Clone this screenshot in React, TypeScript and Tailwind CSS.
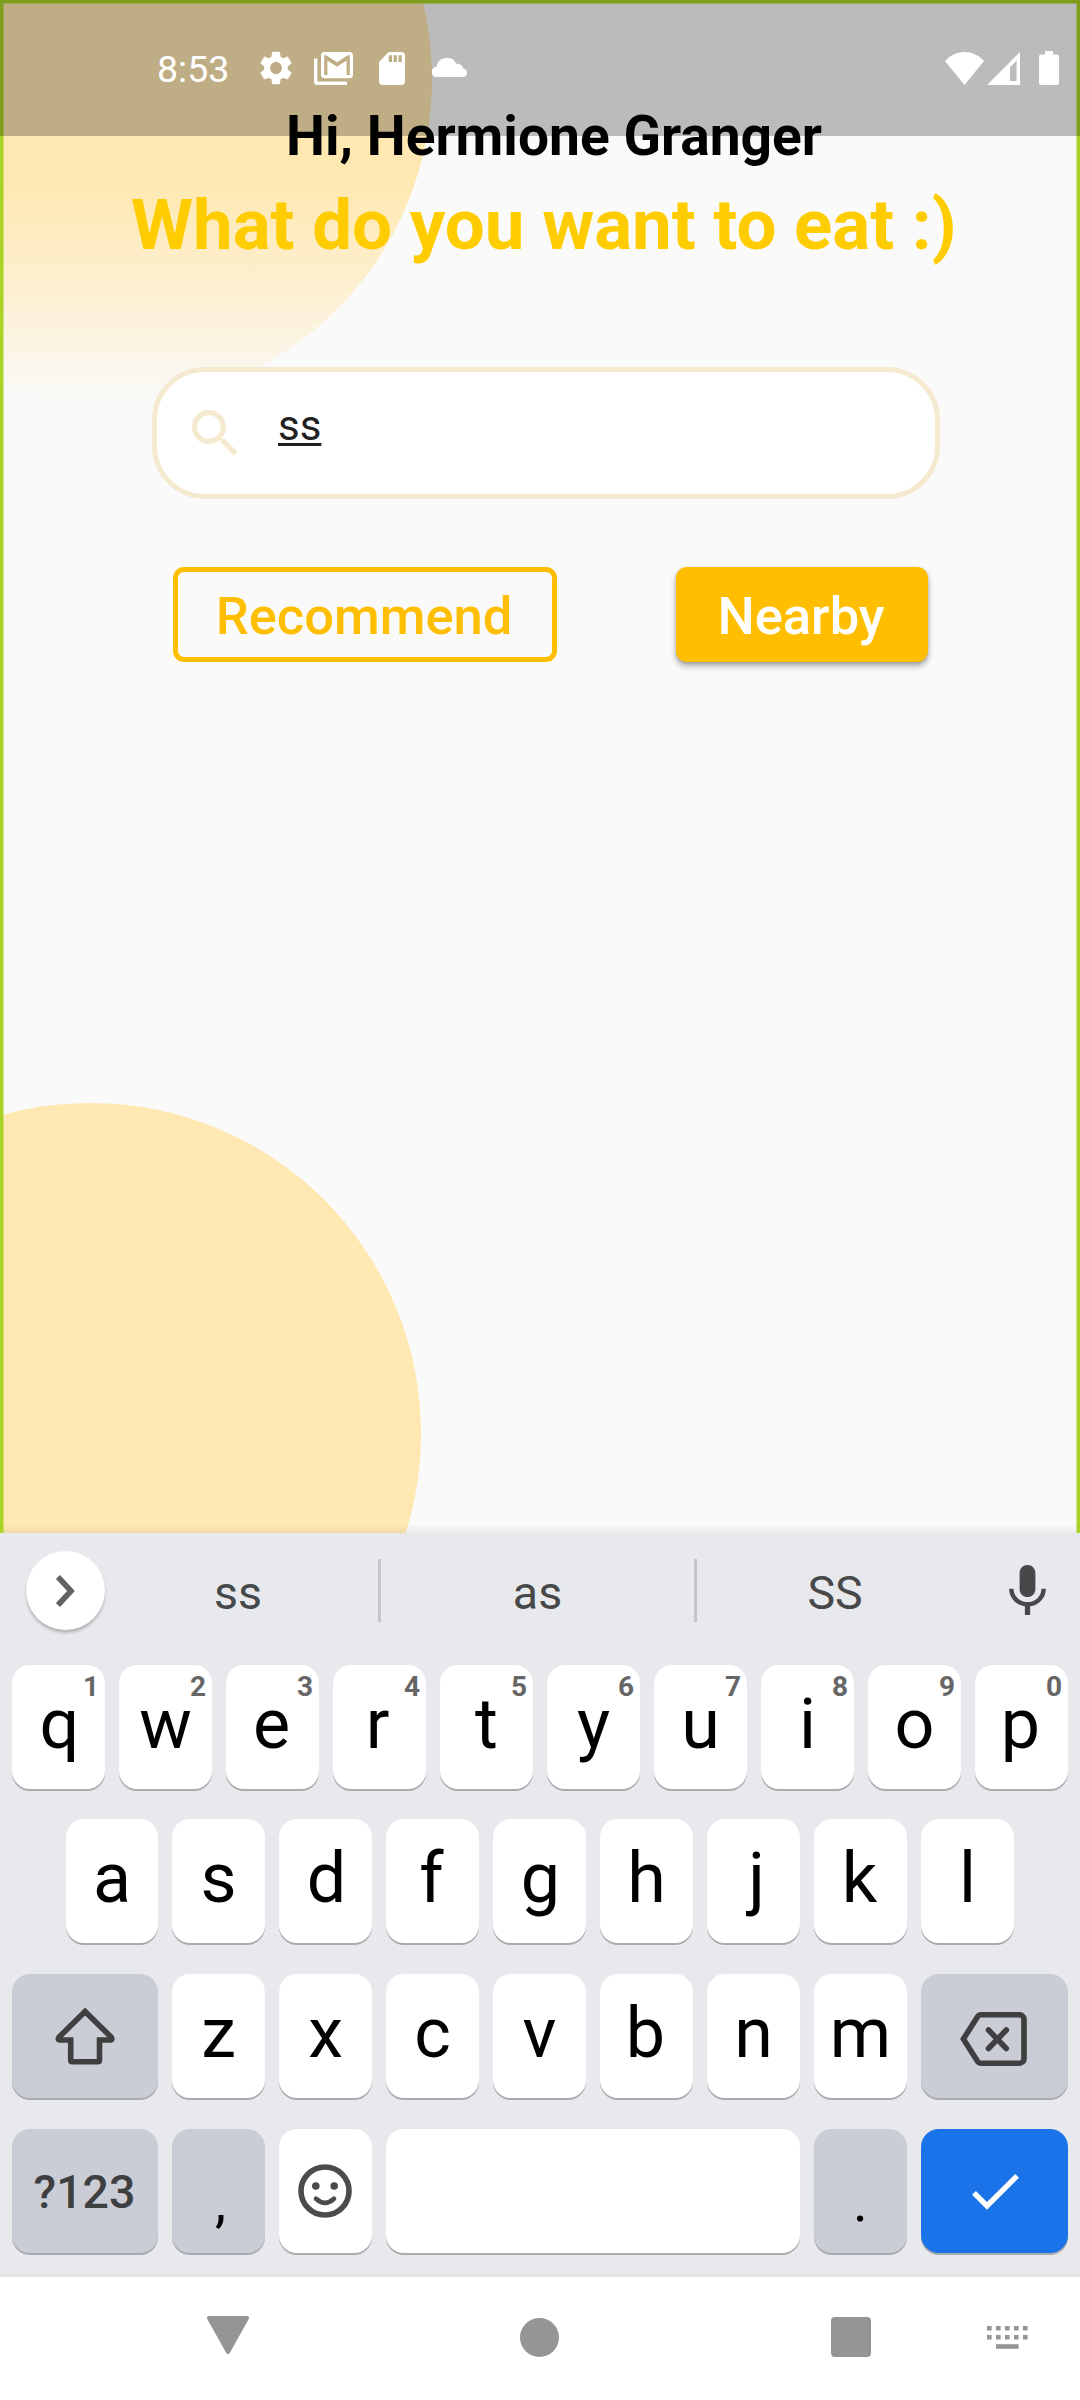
import type { ReactNode } from "react";

/* ---------- Background ---------- */

function Backdrop() {
  return (
    <svg className="absolute inset-0" width="1080" height="1533" viewBox="0 0 1080 1533">
      <defs>
        <linearGradient id="fade" gradientUnits="userSpaceOnUse" x1="0" y1="185" x2="0" y2="404">
          <stop offset="0" stopColor="#ffe8b2" />
          <stop offset="0.5" stopColor="#ffe8b2" stopOpacity="0.55" />
          <stop offset="1" stopColor="#ffe8b2" stopOpacity="0" />
        </linearGradient>
        <linearGradient id="shade" x1="0" y1="0" x2="0" y2="1">
          <stop offset="0" stopColor="#000" stopOpacity="0" />
          <stop offset="1" stopColor="#000" stopOpacity="0.06" />
        </linearGradient>
      </defs>
      <circle cx="105.5" cy="79" r="326.5" fill="url(#fade)" />
      <circle cx="90.5" cy="1433.5" r="330.5" fill="#ffe8b2" />
      <rect x="0" y="1524" width="1080" height="9" fill="url(#shade)" />
      <path d="M3.5 1533V3.5H1076.5V1533" fill="none" stroke="#a9d325" strokeOpacity="0.5" strokeWidth="1" />
      <path d="M1.5 1533V1.5H1078.5V1533" fill="none" stroke="#a9d325" strokeWidth="3" />
    </svg>
  );
}

/* ---------- Status bar ---------- */

function StatusBar() {
  return (
    <div className="relative flex h-[136px] shrink-0 items-center bg-black/25 pr-[21px] pl-[157px] text-white">
      <span className="w-[103px] pt-[2px] text-[37.5px] leading-[40px]">8:53</span>
      <svg className="h-[34px] w-[32px]" viewBox="2.3 2 19.4 20" preserveAspectRatio="none" fill="currentColor">
        <path d="M19.14 12.94c.04-.3.06-.61.06-.94 0-.32-.02-.64-.07-.94l2.03-1.58c.18-.14.23-.41.12-.61l-1.92-3.32c-.12-.22-.37-.29-.59-.22l-2.39.96c-.5-.38-1.03-.7-1.62-.94l-.36-2.54c-.04-.24-.24-.41-.48-.41h-3.84c-.24 0-.43.17-.47.41l-.36 2.54c-.59.24-1.13.57-1.62.94l-2.39-.96c-.22-.08-.47 0-.59.22L2.74 8.87c-.12.21-.08.47.12.61l2.03 1.58c-.05.3-.09.63-.09.94s.02.64.07.94l-2.03 1.58c-.18.14-.23.41-.12.61l1.92 3.32c.12.22.37.29.59.22l2.39-.96c.5.38 1.03.7 1.62.94l.36 2.54c.05.24.24.41.48.41h3.84c.24 0 .44-.17.47-.41l.36-2.54c.59-.24 1.13-.56 1.62-.94l2.39.96c.22.08.47 0 .59-.22l1.92-3.32c.12-.22.07-.47-.12-.61l-2.01-1.58zM12 15.6c-1.98 0-3.6-1.62-3.6-3.6s1.62-3.6 3.6-3.6 3.6 1.62 3.6 3.6-1.62 3.6-3.6 3.6z" />
      </svg>
      <svg className="ml-[22px] h-[33px] w-[39px]" viewBox="0 0 39 33" fill="currentColor">
        <path d="M0 6.5h3.4v23h29.6V33H3.2A3.2 3.2 0 0 1 0 29.8z" />
        <g transform="translate(3.8 -6.56) scale(1.6 1.64)">
          <path fillRule="evenodd" d="M20 4H4c-1.1 0-2 .9-2 2v12c0 1.1.9 2 2 2h16c1.1 0 2-.9 2-2V6c0-1.1-.9-2-2-2zm0 14h-2V9.25L12 13 6 9.25V18H4V6h1.2l6.8 4.25L18.8 6H20v12z" />
        </g>
      </svg>
      <svg className="ml-[26px] h-[33px] w-[26px]" viewBox="4 2 16 20" preserveAspectRatio="none" fill="currentColor">
        <path d="M18 2h-8L4.02 8 4 20c0 1.1.9 2 2 2h12c1.1 0 2-.9 2-2V4c0-1.1-.9-2-2-2zm-6 6h-2V4h2v4zm3 0h-2V4h2v4zm3 0h-2V4h2v4z" />
      </svg>
      <svg className="-mt-[2px] ml-[27px] h-[20px] w-[36px]" viewBox="0 0 36 20" fill="currentColor">
        <path d="M5 20A5 5 0 0 1 4.4 9.8 10.6 10.6 0 0 1 24.4 6.8 7 7 0 0 1 31.4 11.4 4.4 4.4 0 0 1 31.6 20z" />
      </svg>
      <svg className="ml-auto h-[33px] w-[39px]" viewBox="0 0 39 33" fill="currentColor">
        <path d="M19.5 33 0 9C11-3 28-3 39 9z" />
      </svg>
      <svg className="ml-[3px] h-[33px] w-[33px]" viewBox="0 0 33 33" fill="currentColor">
        <path fillRule="evenodd" d="M0 33H33V0zM23 29V15.5L29.6 8.5V29z" />
      </svg>
      <svg className="ml-[19px] h-[34px] w-[20px]" viewBox="0 0 20 34" fill="currentColor">
        <path d="M6 0h8v3.4h4a2 2 0 0 1 2 2V32a2 2 0 0 1-2 2H2a2 2 0 0 1-2-2V5.4a2 2 0 0 1 2-2h4z" />
      </svg>
    </div>
  );
}

/* ---------- App screen ---------- */

function Screen() {
  return (
    <main className="relative flex h-[1533px] flex-col overflow-hidden bg-[#fafafa]">
      <Backdrop />
      <StatusBar />
      <header className="relative -mt-[33px] font-bold whitespace-nowrap">
        <h1 className="pl-[286px] text-[55.125px] leading-[66px] text-black">Hi, Hermione Granger</h1>
        <p className="mt-[15px] pl-[131px] text-[70.875px] leading-[82px] text-[#ffcc00]">What do you want to eat :)</p>
      </header>
      <div className="relative mt-[101px] ml-[152px] flex h-[132px] w-[788px] rounded-[53px] border-[5px] border-[#f5e9cf] bg-white pl-[27px]">
        <svg className="mt-[30px] size-[63px] text-[#f5e9cf]" viewBox="0 0 24 24" fill="currentColor">
          <path d="M15.5 14h-.79l-.28-.27C15.41 12.59 16 11.11 16 9.5 16 5.91 13.09 3 9.5 3S3 5.91 3 9.5 5.91 16 9.5 16c1.61 0 3.09-.59 4.23-1.57l.27.28v.79l5 4.99L20.49 19l-4.99-5zm-6 0C7.01 14 5 11.99 5 9.5S7.01 5 9.5 5 14 7.01 14 9.5 11.99 14 9.5 14z" />
        </svg>
        <span className="mt-[29px] ml-[31px] h-[49px] text-[42px] leading-[49px] text-[#212121] underline decoration-[2.5px] underline-offset-[3px]">
          ss
        </span>
      </div>
      <div className="relative mt-[68px] flex gap-[119px] pl-[173px] text-[52.5px] leading-[62px] font-medium">
        <button className="h-[95px] w-[384px] rounded-[11px] border-[5px] border-[#ffbf00] pt-[2px] pr-[2px] text-[#ffbf00]">
          Recommend
        </button>
        <button className="h-[95px] w-[252px] rounded-[11px] bg-[#ffbf00] pt-[2px] pr-[2px] text-white shadow-[0_4px_6px_rgba(0,0,0,0.32),0_1px_3px_rgba(0,0,0,0.14)]">
          Nearby
        </button>
      </div>
    </main>
  );
}

/* ---------- Keyboard ---------- */

type KeyProps = { children?: ReactNode; className?: string; hint?: string };

function Key({ children, className = "w-[93px] bg-white", hint }: KeyProps) {
  return (
    <div
      className={`relative flex h-[124px] shrink-0 items-center justify-center rounded-[18px] shadow-[0_2px_0_#a9abae] ${className}`}
    >
      {children}
      {hint && (
        <span className="absolute top-[5px] right-[6px] text-[28px] leading-[34px] font-bold text-[#666666]">{hint}</span>
      )}
    </div>
  );
}

// Optical centring: glyphs with uneven side bearings are nudged so that their ink sits mid-key.
const nudge: Record<string, string> = {
  q: "translate-x-[1px]",
  d: "translate-x-[1px]",
  g: "translate-x-[1px]",
  j: "translate-x-[3px]",
  e: "-translate-x-[1px]",
  r: "-translate-x-[2px]",
  f: "-translate-x-[1px]",
  k: "-translate-x-[1px]",
  b: "-translate-x-[1px]",
  p: "-translate-x-[1px]",
};

function Letter({ children }: { children: string }) {
  return (
    <span className={`pb-[6px] text-[70px] leading-[82px] text-black ${nudge[children] ?? ""}`}>{children}</span>
  );
}

const grey = "bg-[#cbcdd6]";
const topRow = "qwertyuiop".split("");
const midRow = "asdfghjkl".split("");
const lowRow = "zxcvbnm".split("");

function Suggestions() {
  return (
    <div className="flex h-[132px] text-[46.5px] leading-[54px] text-[#474849]">
      <div className="flex w-[98px] pt-[18px] pl-[26px]">
        <span className="flex size-[79px] shrink-0 items-center justify-center rounded-full bg-white shadow-[0_3px_3px_rgba(0,0,0,0.22)]">
          <svg className="h-[32px] w-[19px]" viewBox="0 0 19 32" fill="none" stroke="#626262" strokeWidth="5.6">
            <path d="M2 2 15 16 2 30" />
          </svg>
        </span>
      </div>
      <span className="mt-[33px] w-[280px] text-center">ss</span>
      <i className="mt-[26px] h-[63px] w-[3px] bg-[#c4c5c9]" />
      <span className="mt-[33px] w-[313px] text-center">as</span>
      <i className="mt-[26px] h-[63px] w-[3px] bg-[#c4c5c9]" />
      <span className="mt-[33px] w-[277px] pr-[1px] text-center">SS</span>
      <svg className="mt-[32px] ml-[35px] h-[50px] w-[37px] text-[#47484a]" viewBox="5 2 14 19" fill="currentColor">
        <path d="M12 14.2c1.66 0 3-1.34 3-3V5c0-1.66-1.34-3-3-3S9 3.34 9 5v6.2c0 1.66 1.34 3 3 3zM17.3 11c0 3-2.54 5.1-5.3 5.1S6.7 14 6.7 11H5c0 3.41 2.72 6.23 6 6.72V21h2v-3.28c3.28-.48 6-3.3 6-6.72h-1.7z" />
      </svg>
    </div>
  );
}

function Keyboard() {
  return (
    <section className="flex h-[741px] flex-col bg-[#e8e9ed]">
      <Suggestions />
      <div className="flex flex-col gap-[31px] px-[12px]">
        <div className="flex gap-[14px]">
          {topRow.map((k, i) => (
            <Key key={k} hint={String((i + 1) % 10)} className="-mb-px h-[123px] w-[93px] bg-white">
              <Letter>{k}</Letter>
            </Key>
          ))}
        </div>
        <div className="flex gap-[14px] pl-[54px]">
          {midRow.map((k) => (
            <Key key={k} className={k === "a" ? "w-[92px] bg-white" : "w-[93px] bg-white"}>
              <Letter>{k}</Letter>
            </Key>
          ))}
        </div>
        <div className="flex gap-[14px]">
          <Key className={`w-[146px] ${grey}`}>
            <svg className="h-[58px] w-[60px]" viewBox="55 2006.5 60 58" fill="none" stroke="#3f3f40" strokeWidth="5.6">
              <path d="M85.1 2011 111.3 2036.8Q112.8 2039.5 110.5 2039.5H99.5V2059.5Q99.5 2061.2 97.8 2061.2H72.4Q70.7 2061.2 70.7 2059.5V2039.5H59.7Q57.4 2039.5 58.9 2036.8z" />
            </svg>
          </Key>
          {lowRow.map((k) => (
            <Key key={k}>
              <Letter>{k}</Letter>
            </Key>
          ))}
          <Key className={`w-[147px] ${grey}`}>
            <svg className="mt-[5px] -ml-[2px] h-[54px] w-[67px]" viewBox="0 0 67 54" fill="none" stroke="#3f3f42" strokeWidth="5.6">
              <path d="M20.5 2.8H59.5a4.5 4.5 0 0 1 4.500 4.500V46.700a4.500 4.500 0 0 1-4.500 4.500H20.500Q18.800 51.200 17.800 49.700L3.400 27 17.800 4.300Q18.800 2.800 20.500 2.800z" />
              <path strokeLinecap="round" d="M28.500 18 46.300 36.500M46.300 18 28.500 36.500" />
            </svg>
          </Key>
        </div>
        <div className="flex gap-[14px]">
          <Key className={`w-[146px] ${grey}`}>
            <span className="pt-[2px] pr-[1px] text-[46.500px] leading-[54px] font-medium text-[#3e3f41]">?123</span>
          </Key>
          <Key className={`w-[93px] ${grey}`}>
            <span className="translate-x-[2px] pt-[22px] text-[56px] leading-[66px] text-black">,</span>
          </Key>
          <Key>
            <svg className="-ml-px h-[54px] w-[54px]" viewBox="0 0 54 54" fill="none" stroke="#4b4b4b">
              <circle cx="27" cy="27" r="24" strokeWidth="5.600" />
              <circle cx="17.800" cy="22" r="3.800" fill="#4b4b4b" stroke="none" />
              <circle cx="36.200" cy="22" r="3.800" fill="#4b4b4b" stroke="none" />
              <path d="M18 34.800Q27 43 36 34.800" strokeWidth="4.600" strokeLinecap="round" />
            </svg>
          </Key>
          <Key className="w-[414px] bg-white" />
          <Key className={`w-[93px] ${grey}`}>
            <span className="pt-[22px] text-[56px] leading-[66px] text-black">.</span>
          </Key>
          <Key className="w-[147px] bg-[#1a73e8]">
            <svg className="size-[64px] text-white" viewBox="0 0 24 24" fill="currentColor">
              <path d="M9 16.170 4.830 12l-1.420 1.410L9 19 21 7l-1.410-1.410z" />
            </svg>
          </Key>
        </div>
      </div>
    </section>
  );
}

/* ---------- Navigation bar ---------- */

function NavBar() {
  return (
    <nav className="flex h-[126px] items-center border-t-[3px] border-[#e0e2e1] bg-white pb-[3px] pl-[207px] text-[#959595]">
      <svg className="-mt-[5px] h-[38px] w-[42px]" viewBox="0 0 42 38" fill="currentColor" stroke="currentColor" strokeWidth="4" strokeLinejoin="round">
        <path d="M2 2H40L21 36z" />
      </svg>
      <i className="ml-[271px] size-[39px] rounded-full bg-[#959595]" />
      <i className="ml-[272px] size-[40px] rounded-[4px] bg-[#959595]" />
      <svg className="ml-[116px] h-[23px] w-[41px]" viewBox="0 0 41 23" fill="currentColor">
        {[0, 9, 18, 27, 36].map((x) => (
          <path key={x} d={`M${x} 0h4.600v4.600h-4.600zM${x} 9h4.600v4.600h-4.600z`} />
        ))}
        <path d="M9 18.200h22.600v4.600H9z" />
      </svg>
    </nav>
  );
}

export default function App() {
  return (
    <div className="flex h-[2400px] w-[1080px] flex-col overflow-hidden bg-white font-[Roboto,sans-serif]">
      <Screen />
      <Keyboard />
      <NavBar />
    </div>
  );
}
